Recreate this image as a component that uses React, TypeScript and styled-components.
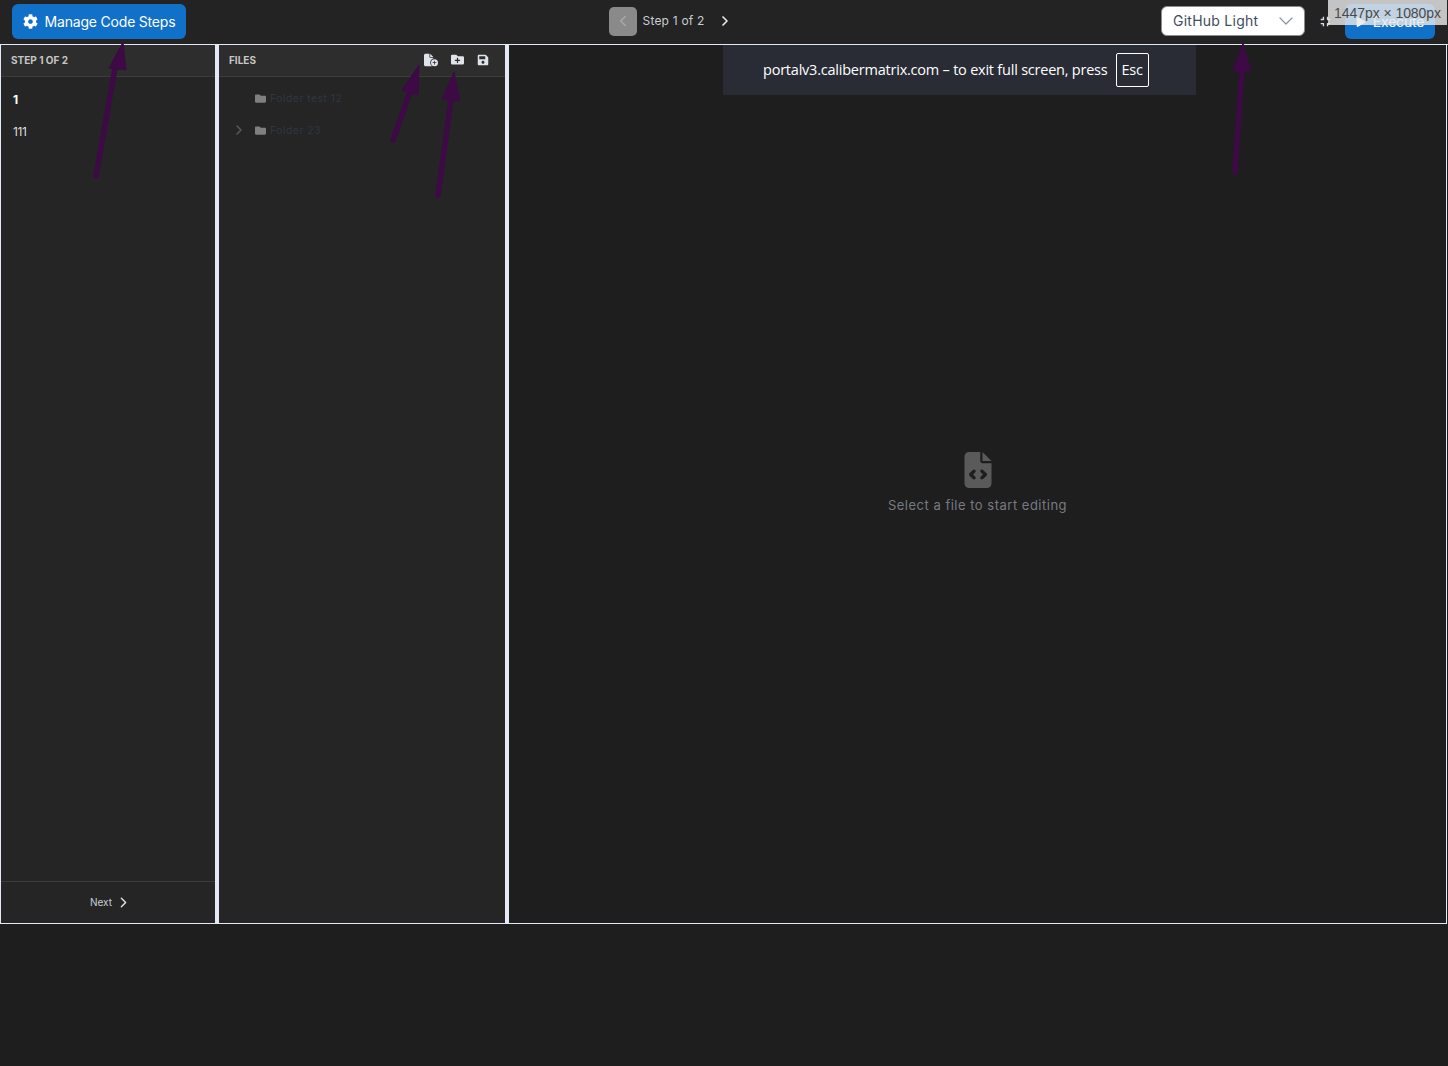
import React from 'react';
import styled, { createGlobalStyle } from 'styled-components';
import { FaCog, FaPlay, FaFolder, FaFolderPlus, FaSave, FaCompress } from 'react-icons/fa';
import { FaFileCirclePlus, FaFileCode } from 'react-icons/fa6';
import { ChevronDown, ChevronLeft, ChevronRight } from 'lucide-react';

const UI_FONT = '"Inter", "Noto Sans", sans-serif';

const GlobalStyle = createGlobalStyle`
  html, body {
    margin: 0;
    padding: 0;
    background: #1e1e1e;
  }
  * {
    box-sizing: border-box;
  }
`;

const Page = styled.div`
  position: relative;
  width: 1448px;
  height: 1066px;
  overflow: hidden;
  background: #1e1e1e;
  font-family: ${UI_FONT};
`;

const TopBar = styled.header`
  height: 45px;
  display: flex;
  align-items: center;
  justify-content: space-between;
  padding: 0 13px 2px 12px;
  background: #232323;
  border-bottom: 1px solid #e5e9f5;
`;

const BlueButton = styled.button`
  height: 35px;
  display: flex;
  align-items: center;
  justify-content: center;
  gap: 7px;
  padding: 1px 0 0;
  border: 0;
  border-radius: 6px;
  background: #1170c8;
  color: #fff;
  font-family: ${UI_FONT};
  font-size: 14px;
  font-weight: 400;
  letter-spacing: -0.2px;
`;

const ManageButton = styled(BlueButton)`
  width: 174px;
`;

const ExecuteButton = styled(BlueButton)`
  width: 90px;
`;

const StepNav = styled.nav`
  width: 124px;
  margin-right: 6px;
  flex: none;
  display: flex;
  align-items: center;
`;

const PrevButton = styled.button`
  width: 28px;
  height: 29px;
  flex: none;
  display: flex;
  align-items: center;
  justify-content: center;
  padding: 0;
  border: 0;
  border-radius: 5px;
  background: #8a8a8a;
  color: #a9a9a9;
`;

const StepLabel = styled.span`
  margin-left: 6px;
  width: 74px;
  flex: none;
  padding-bottom: 1px;
  color: #c9ccd2;
  font-size: 12px;
  letter-spacing: 0.2px;
`;

const NextArrow = styled.span`
  display: flex;
  color: #e8e8e8;
`;

const RightTools = styled.div`
  display: flex;
  align-items: center;
`;

const ThemeSelect = styled.div`
  width: 144px;
  height: 30px;
  display: flex;
  align-items: center;
  justify-content: space-between;
  padding: 0 6px 1px 11px;
  border: 1px solid #8d8d8d;
  border-radius: 6px;
  background: #fff;
  color: #3f4b5f;
  font-size: 14px;
  letter-spacing: 0.25px;
`;

const CompressIcon = styled.span`
  display: flex;
  margin: 0 14px 0 15px;
  color: #d8dde6;
`;

const Workspace = styled.main`
  height: 879px;
  display: flex;
  background: #1e1e1e;
  border-left: 1px solid #e5e9f5;
  border-right: 1px solid #e5e9f5;
  border-bottom: 1px solid #e5e9f5;
  margin-right: 1px;
`;

const Panel = styled.section<{ $width: number }>`
  width: ${p => p.$width}px;
  flex: none;
  display: flex;
  flex-direction: column;
  background: #252525;
  border-right: 4px solid #e5e9f5;
`;

const PanelHeader = styled.div`
  height: 32px;
  flex: none;
  display: flex;
  align-items: center;
  justify-content: space-between;
  padding: 0 16px 0 10px;
  background: #2d2d2d;
  border-bottom: 1px solid #3c3c3c;
`;

const PanelTitle = styled.h3`
  margin: 0;
  padding-bottom: 1px;
  color: #c6c6c6;
  font-size: 10px;
  font-weight: 700;
`;

const HeaderActions = styled.div`
  display: flex;
  align-items: center;
  gap: 13px;
  padding-bottom: 2px;
  color: #dfe3ea;
`;

const StepList = styled.ul`
  flex: 1;
  margin: 0;
  padding: 6px 0 0 12px;
  list-style: none;
`;

const StepItem = styled.li<{ $active?: boolean }>`
  height: 32px;
  display: flex;
  align-items: center;
  color: ${p => (p.$active ? '#ffffff' : '#dedede')};
  font-size: 12px;
  font-weight: ${p => (p.$active ? 700 : 400)};
  letter-spacing: -0.4px;
`;

const PanelFooter = styled.div`
  height: 42px;
  flex: none;
  display: flex;
  align-items: center;
  justify-content: center;
  gap: 3px;
  padding: 0 0 1px 6px;
  border-top: 1px solid #3c3c3c;
  color: #c9ced6;
  font-size: 10px;
`;

const FileTree = styled.div`
  flex: 1;
  padding-top: 5px;
`;

const FolderRow = styled.div`
  height: 32px;
  display: flex;
  align-items: center;
  padding-left: 12px;
`;

const Caret = styled.span`
  width: 24px;
  display: flex;
  color: #555c6b;
`;

const FolderIcon = styled.span`
  display: flex;
  color: #7f7f7f;
`;

const FolderName = styled.span`
  margin-left: 4px;
  color: #2f3644;
  font-size: 10.5px;
  letter-spacing: 0.45px;
`;

const Editor = styled.section`
  flex: 1;
  display: flex;
  flex-direction: column;
  align-items: center;
  justify-content: center;
  padding-bottom: 4px;
  background: #1e1e1e;
`;

const EmptyIcon = styled.span`
  display: flex;
  color: #5a5a5a;
`;

const EmptyText = styled.p`
  margin: 9px 0 0;
  color: #767b80;
  font-size: 13px;
  letter-spacing: 0.5px;
`;

const FullscreenToast = styled.div`
  position: absolute;
  left: 723px;
  top: 45px;
  width: 473px;
  height: 50px;
  display: flex;
  align-items: center;
  padding-left: 40px;
  background: #292c35;
  color: #fff;
  font-family: "Open Sans", "Noto Sans", sans-serif;
  font-size: 14.5px;
  letter-spacing: -0.22px;
`;

const ToastText = styled.span`
  padding-bottom: 2px;
`;

const EscKey = styled.span`
  width: 33px;
  height: 34px;
  display: flex;
  align-items: center;
  justify-content: center;
  margin-left: 8px;
  padding-bottom: 2px;
  border: 1px solid #fff;
  border-radius: 2px;
`;

const SizeTooltip = styled.div`
  position: absolute;
  top: 0;
  right: 1px;
  width: 119px;
  height: 25px;
  display: flex;
  align-items: center;
  justify-content: center;
  background: rgba(232, 232, 232, 0.82);
  color: #4a4a4a;
  font-family: "Liberation Sans", Arial, sans-serif;
  font-size: 14px;
  letter-spacing: -0.05px;
`;

const Annotations = styled.svg`
  position: absolute;
  left: 0;
  top: 0;
  pointer-events: none;
`;

const ARROWS = [
  { tail: '96,176 115,68', head: '123,42 109,68 126,70' },
  { tail: '393,140 410,92', head: '419,65 402,90 418,95' },
  { tail: '438,195 451,100', head: '454,72 442,99 460,101' },
  { tail: '1235,172 1242,71', head: '1243,43 1233,71 1251,71' },
];

const App: React.FC = () => {
  return (
    <Page>
      <GlobalStyle />
      <TopBar>
        <ManageButton>
          <FaCog size={15} />
          Manage Code Steps
        </ManageButton>
        <StepNav>
          <PrevButton>
            <ChevronLeft size={18} />
          </PrevButton>
          <StepLabel>Step 1 of 2</StepLabel>
          <NextArrow>
            <ChevronRight size={16} strokeWidth={2.5} />
          </NextArrow>
        </StepNav>
        <RightTools>
          <ThemeSelect>
            GitHub Light
            <ChevronDown size={24} color="#8a93a5" strokeWidth={1.2} />
          </ThemeSelect>
          <CompressIcon>
            <FaCompress size={11} />
          </CompressIcon>
          <ExecuteButton>
            <FaPlay size={10} />
            Execute
          </ExecuteButton>
        </RightTools>
      </TopBar>

      <Workspace>
        <Panel $width={218}>
          <PanelHeader>
            <PanelTitle>STEP 1 OF 2</PanelTitle>
          </PanelHeader>
          <StepList>
            <StepItem $active>1</StepItem>
            <StepItem>111</StepItem>
          </StepList>
          <PanelFooter>
            Next
            <ChevronRight size={17} strokeWidth={2} color="#e0e3e8" />
          </PanelFooter>
        </Panel>

        <Panel $width={290}>
          <PanelHeader>
            <PanelTitle>FILES</PanelTitle>
            <HeaderActions>
              <FaFileCirclePlus size={14} />
              <FaFolderPlus size={13} />
              <FaSave size={12} />
            </HeaderActions>
          </PanelHeader>
          <FileTree>
            <FolderRow>
              <Caret />
              <FolderIcon>
                <FaFolder size={11} />
              </FolderIcon>
              <FolderName>Folder test 12</FolderName>
            </FolderRow>
            <FolderRow>
              <Caret>
                <ChevronRight size={16} />
              </Caret>
              <FolderIcon>
                <FaFolder size={11} />
              </FolderIcon>
              <FolderName>Folder 23</FolderName>
            </FolderRow>
          </FileTree>
        </Panel>

        <Editor>
          <EmptyIcon>
            <FaFileCode size={36} />
          </EmptyIcon>
          <EmptyText>Select a file to start editing</EmptyText>
        </Editor>
      </Workspace>

      <FullscreenToast>
        <ToastText>portalv3.calibermatrix.com – to exit full screen, press</ToastText>
        <EscKey>Esc</EscKey>
      </FullscreenToast>

      <SizeTooltip>1447px × 1080px</SizeTooltip>

      <Annotations width={1448} height={1066}>
        {ARROWS.map(arrow => (
          <g key={arrow.head} fill="#3d0a45" stroke="#3d0a45">
            <polyline points={arrow.tail} strokeWidth={5.5} strokeLinecap="round" fill="none" />
            <polygon points={arrow.head} strokeWidth={1} />
          </g>
        ))}
      </Annotations>
    </Page>
  );
};

export default App;
